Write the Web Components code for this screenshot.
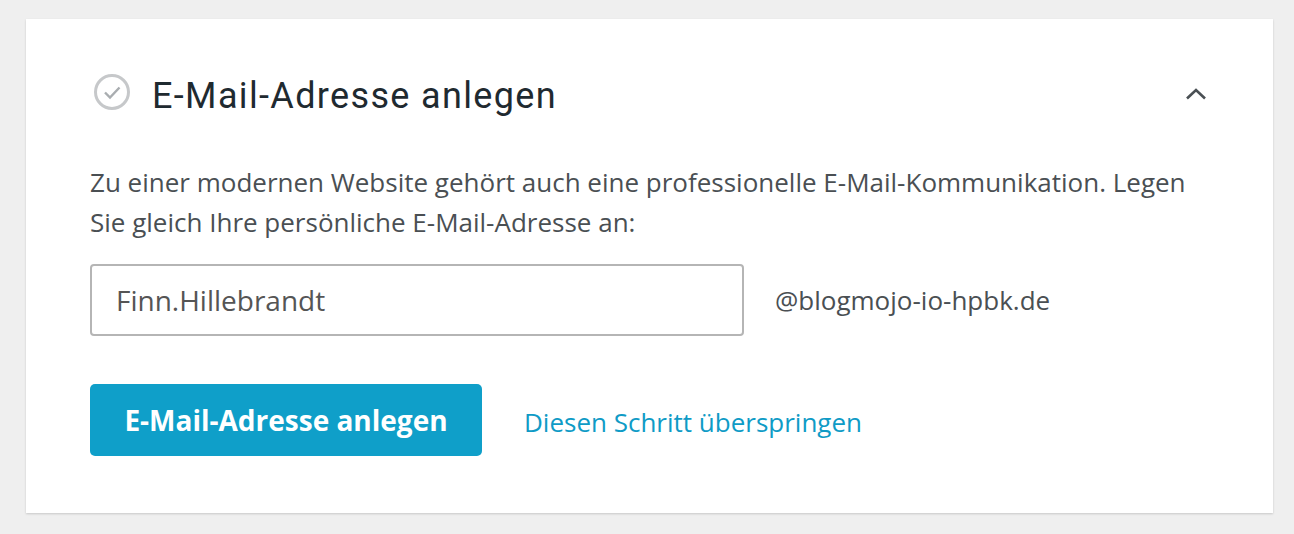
<template id="step-card-template">
    <style>
        :host {
            display: block;
            width: 1247px;
            height: 494px;
            margin: 19px 0 0 26px;
            box-sizing: border-box;
            padding: 52px 65px 0 64px;
            background: #fff;
            box-shadow: 0 1px 2px rgba(0, 0, 0, .16);
        }
    </style>
    <slot></slot>
</template>
<template id="step-header-template">
    <style>
        :host {
            display: flex;
            align-items: center;
            height: 48px;
            color: #1f2a30;
        }
        svg { flex: none; display: block; }
        .check { margin: 0 21px 7px 3px; }
        .chevron { margin: 0 1px 2px 0; }
        .title {
            flex: 1;
            padding-top: 2px;
            font: 400 36px/48px Roboto, sans-serif;
            letter-spacing: 1.35px;
            white-space: nowrap;
        }
    </style>
    <svg class="check" width="38" height="38" viewBox="0 0 38 38" fill="none">
        <circle cx="19" cy="19" r="16.5" stroke="#c6c8ca" stroke-width="3"/>
        <path d="M12 19.5l5 5 9.5-10" stroke="#a9adb0" stroke-width="2.4"/>
    </svg>
    <span class="title"><slot></slot></span>
    <svg class="chevron" width="22" height="14" viewBox="0 0 22 14" fill="none">
        <path d="M2 11.5l9-8.5 9 8.5" stroke="#4a5054" stroke-width="2.6"/>
    </svg>
</template>
<template id="address-field-template">
    <style>
        :host {
            display: flex;
            align-items: center;
            margin-top: 22px;
            color: #4a4f53;
            font: 26px/34px "Open Sans", sans-serif;
        }
        .box {
            width: 654px;
            height: 72px;
            box-sizing: border-box;
            padding: 0 24px;
            margin-right: 31px;
            display: flex;
            align-items: center;
            border: 2px solid #b5b5b5;
            border-radius: 4px;
            font-size: 28px;
            color: #555;
        }
    </style>
    <div class="box"><slot></slot></div>
    <slot name="domain"></slot>
</template>
<template id="step-actions-template">
    <style>
        :host {
            display: flex;
            align-items: center;
            margin-top: 48px;
            font: 26px/34px "Open Sans", sans-serif;
        }
        .primary {
            width: 392px;
            height: 72px;
            margin-right: 42px;
            display: flex;
            align-items: center;
            justify-content: center;
            border-radius: 5px;
            background: #0f9fc9;
            color: #fff;
            font-size: 28px;
            font-weight: 700;
        }
        .skip { color: #0f9bc6; padding-top: 3px; }
    </style>
    <div class="primary"><slot></slot></div>
    <span class="skip"><slot name="skip"></slot></span>
</template>
<style>
    html, body { margin: 0; background: #efefef; }
    p {
        margin: 43px 0 0;
        color: #4a4f53;
        font: 26px/40px "Open Sans", sans-serif;
        white-space: nowrap;
    }
</style>

<body>
    <step-card>
        <step-header>E-Mail-Adresse anlegen</step-header>
        <p>Zu einer modernen Website gehört auch eine professionelle E-Mail-Kommunikation. Legen<br>Sie gleich Ihre persönliche E-Mail-Adresse an:</p>
        <address-field>Finn.Hillebrandt<span slot="domain">@blogmojo-io-hpbk.de</span></address-field>
        <step-actions>E-Mail-Adresse anlegen<span slot="skip">Diesen Schritt überspringen</span></step-actions>
    </step-card>
</body>
<script>
    function define(name) {
        customElements.define(name, class extends HTMLElement {
            constructor() {
                super();
                const template = document.querySelector(`#${name}-template`);
                const clone = document.importNode(template.content, true);
                this.attachShadow({ mode: 'open' }).appendChild(clone);
            }
        });
    }
    ['step-card', 'step-header', 'address-field', 'step-actions'].forEach(define);
</script>
